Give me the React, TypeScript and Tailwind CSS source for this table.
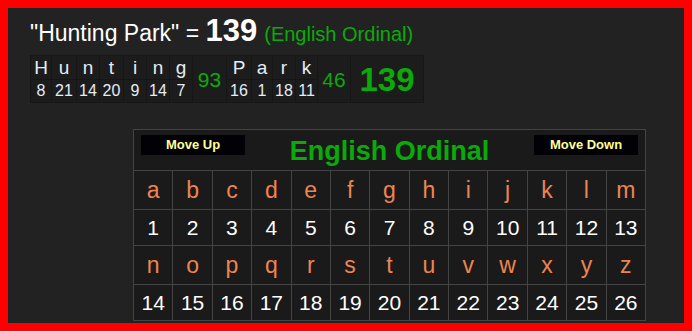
import React from "react";

const font = { fontFamily: '"Liberation Sans", Arial, sans-serif' };

const letters = "abcdefghijklmnopqrstuvwxyz".split("");

type Cell = { l: string; n: number; w: number };
const word1: Cell[] = [
  { l: "H", n: 8, w: 21 },
  { l: "u", n: 21, w: 25 },
  { l: "n", n: 14, w: 23 },
  { l: "t", n: 20, w: 24 },
  { l: "i", n: 9, w: 23 },
  { l: "n", n: 14, w: 23 },
  { l: "g", n: 7, w: 23 },
];
const word2: Cell[] = [
  { l: "P", n: 16, w: 25 },
  { l: "a", n: 1, w: 21 },
  { l: "r", n: 18, w: 23 },
  { l: "k", n: 11, w: 22 },
];

export default function App() {
  return (
    <div
      className="w-[692px] h-[331px] border-8 border-[#ff0000] bg-[#222222] pl-[22px] pt-[7px] overflow-hidden"
      style={font}
    >
      <div className="flex items-baseline leading-none h-[31px] whitespace-nowrap">
        <span className="text-[23px] text-white">"Hunting Park" =&nbsp;</span>
        <span className="text-[31px] font-bold text-white">139</span>
        <span className="text-[20px] text-[#0aaa0a] ml-[7px]">(English Ordinal)</span>
      </div>

      <table className="mt-[9px] border-collapse bg-[#1c1c1c] text-[#e4ecf6] leading-none">
        <tbody>
          <tr>
            {word1.map((c, i) => (
              <td
                key={"a" + i}
                className="h-[24px] text-center text-[19px] border border-[#161616] p-0"
                style={{ width: c.w }}
              >
                {c.l}
              </td>
            ))}
            <td rowSpan={2} className="w-[34px] text-center text-[21px] text-[#0aaa0a] border border-[#161616] p-0">
              93
            </td>
            {word2.map((c, i) => (
              <td
                key={"b" + i}
                className="h-[24px] text-center text-[19px] border border-[#161616] p-0"
                style={{ width: c.w }}
              >
                {c.l}
              </td>
            ))}
            <td rowSpan={2} className="w-[33px] text-center text-[21px] text-[#0aaa0a] border border-[#161616] p-0">
              46
            </td>
            <td rowSpan={2} className="w-[73px] text-center text-[33px] font-bold text-[#0aaa0a] border border-[#161616] p-0">
              139
            </td>
          </tr>
          <tr>
            {word1.map((c, i) => (
              <td key={"c" + i} className="h-[23px] text-center text-[16px] border border-[#161616] p-0">
                {c.n}
              </td>
            ))}
            {word2.map((c, i) => (
              <td key={"d" + i} className="h-[23px] text-center text-[16px] border border-[#161616] p-0">
                {c.n}
              </td>
            ))}
          </tr>
        </tbody>
      </table>

      <div className="ml-[103px] mt-[26px] w-[513px] grid grid-cols-[repeat(13,minmax(0,1fr))] gap-px p-px bg-[#444444]">
        <div className="col-span-13 h-[40px] bg-[#1a1a1a] flex items-start justify-between px-[7px] pt-[5px]">
          <div className="w-[104px] h-[20px] bg-[#020206] text-[#ffff99] font-bold text-[13px] flex items-center justify-center">
            Move Up
          </div>
          <div className="text-[27px] font-bold text-[#0aaa0a] leading-none mt-[3px]">English Ordinal</div>
          <div className="w-[104px] h-[20px] bg-[#020206] text-[#ffff99] font-bold text-[13px] flex items-center justify-center">
            Move Down
          </div>
        </div>
        {[0, 1].map((r) => (
          <React.Fragment key={r}>
            {letters.slice(r * 13, r * 13 + 13).map((l) => (
              <div key={l} className="h-[38px] bg-[#1a1a1a] flex items-center justify-center text-[23px] text-[#ee8450]">
                {l}
              </div>
            ))}
            {letters.slice(r * 13, r * 13 + 13).map((l, i) => (
              <div key={l + "n"} className="h-[35px] bg-[#1a1a1a] flex items-center justify-center text-[21px] text-white">
                {r * 13 + i + 1}
              </div>
            ))}
          </React.Fragment>
        ))}
      </div>
    </div>
  );
}
